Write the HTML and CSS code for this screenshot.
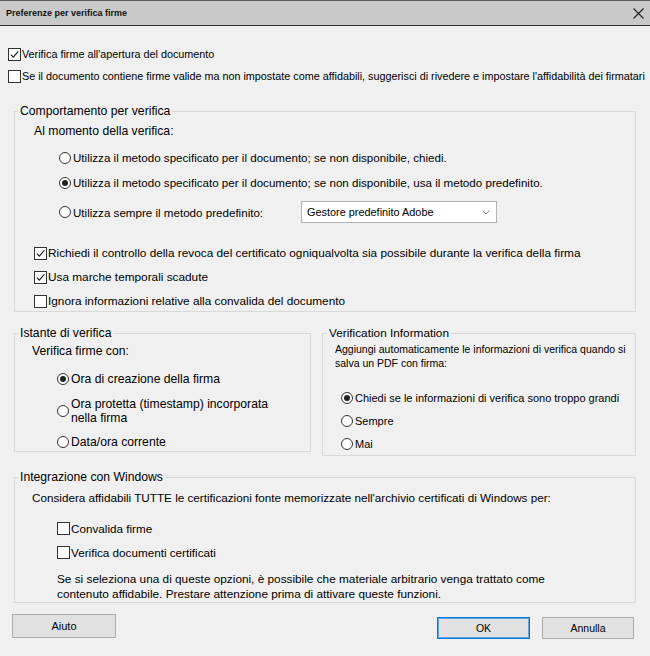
FILE: index.html
```html
<!DOCTYPE html>
<html lang="it">
<head>
    <meta charset="UTF-8">
    <meta name="viewport" content="width=device-width, initial-scale=1.0">
    <title>Preferenze per verifica firme</title>
    <link rel="stylesheet" href="styles.css">
</head>
<body>
    <div class="titlebar">
        <span class="title">Preferenze per verifica firme</span>
        <span class="close">
            <svg width="11" height="11" viewBox="0 0 11 11"><path d="M0.5 0.5 L10.5 10.5 M10.5 0.5 L0.5 10.5" stroke="#1e1e1e" stroke-width="1.1" fill="none"/></svg>
        </span>
    </div>

    <div class="dialog">
        <!-- opzioni generali -->
        <div class="top-options">
            <label class="option"><span class="box on"><svg width="11" height="11" viewBox="0 0 11 11"><path d="M1.8 5.6 L4.3 8.1 L9.3 2.4" stroke="#222" stroke-width="1.2" fill="none"/></svg></span>Verifica firme all'apertura del documento</label>
            <label class="option"><span class="box"></span>Se il documento contiene firme valide ma non impostate come affidabili, suggerisci di rivedere e impostare l'affidabilità dei firmatari</label>
        </div>

        <fieldset class="group behaviour">
            <legend>Comportamento per verifica</legend>
            <div class="lead">Al momento della verifica:</div>
            <div class="methods">
                <label class="option method"><span class="radio"></span>Utilizza il metodo specificato per il documento; se non disponibile, chiedi.</label>
                <label class="option method"><span class="radio on"></span>Utilizza il metodo specificato per il documento; se non disponibile, usa il metodo predefinito.</label>
                <div class="default-method">
                    <label class="option method-label"><span class="radio"></span>Utilizza sempre il metodo predefinito:</label>
                    <div class="select">
                        <span class="select-value">Gestore predefinito Adobe</span>
                        <span class="select-arrow"><svg width="8" height="5" viewBox="0 0 8 5"><path d="M0.5 0.5 L4 4 L7.5 0.5" stroke="#8a8a8a" stroke-width="1" fill="none"/></svg></span>
                    </div>
                </div>
            </div>
            <div class="checks">
                <label class="option"><span class="box on"><svg width="11" height="11" viewBox="0 0 11 11"><path d="M1.8 5.6 L4.3 8.1 L9.3 2.4" stroke="#222" stroke-width="1.2" fill="none"/></svg></span>Richiedi il controllo della revoca del certificato ogniqualvolta sia possibile durante la verifica della firma</label>
                <label class="option"><span class="box on"><svg width="11" height="11" viewBox="0 0 11 11"><path d="M1.8 5.6 L4.3 8.1 L9.3 2.4" stroke="#222" stroke-width="1.2" fill="none"/></svg></span>Usa marche temporali scadute</label>
                <label class="option"><span class="box"></span>Ignora informazioni relative alla convalida del documento</label>
            </div>
        </fieldset>

        <div class="columns">
            <fieldset class="group instant">
                <legend>Istante di verifica</legend>
                <div class="lead">Verifica firme con:</div>
                <div class="radios">
                    <label class="option"><span class="radio on"></span>Ora di creazione della firma</label>
                    <label class="option tall"><span class="radio"></span><span class="wrap">Ora protetta (timestamp) incorporata nella firma</span></label>
                    <label class="option last"><span class="radio"></span>Data/ora corrente</label>
                </div>
            </fieldset>

            <fieldset class="group verification">
                <legend>Verification Information</legend>
                <p class="info">Aggiungi automaticamente le informazioni di verifica quando si<br>salva un PDF con firma:</p>
                <div class="radios">
                    <label class="option"><span class="radio on"></span>Chiedi se le informazioni di verifica sono troppo grandi</label>
                    <label class="option"><span class="radio"></span>Sempre</label>
                    <label class="option"><span class="radio"></span>Mai</label>
                </div>
            </fieldset>
        </div>

        <fieldset class="group windows">
            <legend>Integrazione con Windows</legend>
            <div class="lead">Considera affidabili TUTTE le certificazioni fonte memorizzate nell'archivio certificati di Windows per:</div>
            <div class="checks">
                <label class="option"><span class="box"></span>Convalida firme</label>
                <label class="option"><span class="box"></span>Verifica documenti certificati</label>
            </div>
            <p class="note">Se si seleziona una di queste opzioni, è possibile che materiale arbitrario venga trattato come<br>contenuto affidabile. Prestare attenzione prima di attivare queste funzioni.</p>
        </fieldset>

        <div class="buttons">
            <button class="btn help">Aiuto</button>
            <span class="spacer"></span>
            <button class="btn primary">OK</button>
            <button class="btn">Annulla</button>
        </div>
    </div>
</body>
</html>
```

FILE: styles.css
```css
/* Finestra di dialogo stile Windows */
* {
    box-sizing: border-box;
}

body {
    margin: 0;
    background-color: #f0f0f0;
    font-family: "Liberation Sans", Arial, sans-serif;
    color: #000;
}

.titlebar {
    display: flex;
    align-items: center;
    justify-content: space-between;
    height: 26px;
    padding: 0 6px;
    background-color: #c9c9c9;
    border-top: 1px solid #5c5c5c;
    border-bottom: 1px solid #2e2e2e;
}

.title {
    font-size: 9px;
    font-weight: bold;
    color: #111;
}

.close svg {
    display: block;
}

.dialog {
    padding: 0 8px;
}

/* righe con checkbox / radio */
.option {
    display: flex;
    align-items: center;
    height: 20px;
    white-space: nowrap;
}

.box {
    flex: none;
    width: 13px;
    height: 13px;
    margin-right: 1px;
    border: 1px solid #333;
    background-color: #fff;
}

.box svg {
    display: block;
}

.radio {
    flex: none;
    position: relative;
    width: 12px;
    height: 12px;
    margin-right: 2px;
    border: 1px solid #333;
    border-radius: 50%;
    background-color: #fff;
}

.radio.on::after {
    content: "";
    position: absolute;
    left: 2px;
    top: 2px;
    width: 6px;
    height: 6px;
    border-radius: 50%;
    background-color: #222;
}

.top-options {
    margin-top: 17px;
    font-size: 10.8px;
}

.top-options .option {
    height: 22px;
}

/* gruppi */
.group {
    margin: 0 6px;
    padding: 0;
    border: 1px solid #d9d9d9;
    min-width: 0;
}

.group legend {
    margin-left: 3px;
    padding: 0 2px;
    font-size: 12.2px;
    line-height: 16px;
}

.lead {
    display: flex;
    align-items: center;
    white-space: nowrap;
}

/* Comportamento per verifica */
.behaviour {
    margin-top: 16px;
    font-size: 11.6px;
}

.behaviour .lead {
    height: 24px;
    margin-left: 19px;
    font-size: 12.2px;
}

.methods {
    margin-top: 2px;
    padding-left: 44px;
}

.methods .method {
    height: 25px;
}

.default-method {
    display: flex;
    align-items: center;
    height: 24px;
    margin-top: 5px;
}

.method-label {
    width: 242px;
}

.select {
    display: flex;
    align-items: center;
    width: 196px;
    height: 22px;
    border: 1px solid #b3b3b3;
    background-color: #fff;
    font-size: 10.9px;
}

.select-value {
    flex: 1;
    padding-left: 5px;
}

.select-arrow {
    display: flex;
    align-items: center;
    justify-content: center;
    width: 20px;
    height: 100%;
}

.behaviour .checks {
    display: flex;
    flex-direction: column;
    gap: 4px;
    margin-top: 19px;
    padding-left: 19px;
    font-size: 11.8px;
}

/* Istante di verifica / Verification Information */
.columns {
    display: grid;
    grid-template-columns: 297px 1fr;
    column-gap: 11px;
    align-items: start;
    margin: 13px 6px 0;
}

.columns .group {
    margin: 0;
}

.instant {
    font-size: 12.2px;
}

.instant .lead {
    height: 20px;
    margin-left: 17px;
}

.instant .radios {
    display: flex;
    flex-direction: column;
    gap: 8px;
    margin-top: 8px;
    padding-left: 42px;
}

.instant .tall {
    height: 28px;
}

.instant .last {
    height: 18px;
}

.wrap {
    white-space: normal;
    width: 205px;
    line-height: 14px;
}

.verification {
    font-size: 11px;
    padding-bottom: 1px;
}

.verification legend {
    margin-left: 4px;
    font-size: 11.8px;
}

.info {
    margin: 1px 0 0 12px;
    line-height: 14px;
    white-space: nowrap;
    font-size: 10.5px;
}

.verification .radios {
    display: flex;
    flex-direction: column;
    gap: 3px;
    margin-top: 18px;
    padding-left: 18px;
}

/* Integrazione con Windows */
.windows {
    margin-top: 13px;
    font-size: 11.7px;
}

.windows .lead {
    height: 20px;
    margin: 2px 0 0 17px;
}

.windows .checks {
    display: flex;
    flex-direction: column;
    gap: 4px;
    margin-top: 11px;
    padding-left: 42px;
}

.note {
    margin: 10px 0 0 42px;
    line-height: 15px;
    white-space: nowrap;
    font-size: 11.8px;
}

/* pulsanti */
.buttons {
    display: flex;
    align-items: flex-start;
    margin: 11px 8px 0 4px;
}

.spacer {
    flex: 1;
}

.btn {
    height: 22px;
    margin-top: 3px;
    padding: 0;
    width: 92px;
    border: 1px solid #adadad;
    background-color: #e1e1e1;
    font-family: "Liberation Sans", Arial, sans-serif;
    font-size: 10.5px;
    color: #000;
}

.btn.help {
    width: 104px;
    height: 24px;
    margin-top: 0;
    font-size: 11px;
}

.btn.primary {
    width: 93px;
    margin-right: 12px;
    border-color: #0078d7;
    box-shadow: inset 0 0 0 1px #5ea4e3;
}
```
